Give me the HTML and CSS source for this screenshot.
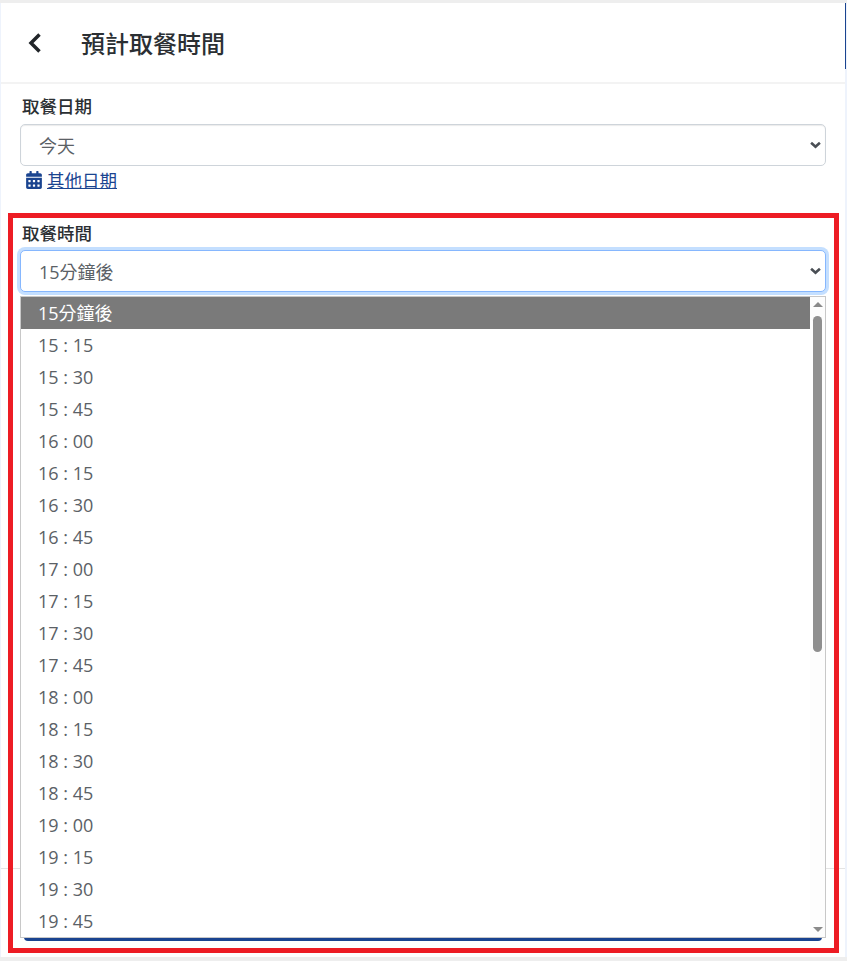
FILE: index.html
```html
<!DOCTYPE html>
<html lang="zh-Hant">
<head>
  <meta charset="UTF-8">
  <meta name="viewport" content="width=device-width, initial-scale=1.0">
  <title>預計取餐時間</title>
  <link rel="stylesheet" href="styles.css">
</head>

<body>
  <div class="page">
    <header class="header">
      <svg class="back-icon" viewBox="0 0 14 20" aria-hidden="true">
        <polyline points="11.500,1.500 3,10 11.500,18.500" />
      </svg>
      <h1>預計取餐時間</h1>
      <span class="scroll-mark"></span>
    </header>

    <form class="form">
      <label for="pickup-date">取餐日期</label>
      <select id="pickup-date" class="select">
        <option>今天</option>
      </select>
      <a class="date-link" href="#">
        <svg class="calendar-icon" viewBox="0 0 448 512" aria-hidden="true">
          <path d="M0 464c0 26.500 21.500 48 48 48h352c26.500 0 48-21.500 48-48V192H0v272zm320-196c0-6.600 5.400-12 12-12h40c6.600 0 12 5.400 12 12v40c0 6.600-5.400 12-12 12h-40c-6.600 0-12-5.400-12-12v-40zm0 128c0-6.600 5.400-12 12-12h40c6.600 0 12 5.400 12 12v40c0 6.600-5.400 12-12 12h-40c-6.600 0-12-5.400-12-12v-40zM192 268c0-6.600 5.400-12 12-12h40c6.600 0 12 5.400 12 12v40c0 6.600-5.400 12-12 12h-40c-6.600 0-12-5.400-12-12v-40zm0 128c0-6.600 5.400-12 12-12h40c6.600 0 12 5.400 12 12v40c0 6.600-5.400 12-12 12h-40c-6.600 0-12-5.400-12-12v-40zM64 268c0-6.600 5.400-12 12-12h40c6.600 0 12 5.400 12 12v40c0 6.600-5.400 12-12 12H76c-6.600 0-12-5.400-12-12v-40zm0 128c0-6.600 5.400-12 12-12h40c6.600 0 12 5.400 12 12v40c0 6.600-5.400 12-12 12H76c-6.600 0-12-5.400-12-12v-40zM400 64h-48V16c0-8.800-7.200-16-16-16h-32c-8.800 0-16 7.200-16 16v48H160V16c0-8.800-7.200-16-16-16h-32c-8.800 0-16 7.200-16 16v48H48C21.500 64 0 85.500 0 112v48h448v-48c0-26.500-21.500-48-48-48z" />
        </svg>
        <span>其他日期</span>
      </a>

      <label for="pickup-time" class="time-label">取餐時間</label>
      <select id="pickup-time" class="select select-focus">
        <option>15分鐘後</option>
      </select>
    </form>

    <footer class="footer">
      <button type="button" class="confirm"></button>
    </footer>

    <div class="dropdown">
      <ul class="dropdown-list">
        <li class="selected">15分鐘後</li>
        <li>15 : 15</li>
        <li>15 : 30</li>
        <li>15 : 45</li>
        <li>16 : 00</li>
        <li>16 : 15</li>
        <li>16 : 30</li>
        <li>16 : 45</li>
        <li>17 : 00</li>
        <li>17 : 15</li>
        <li>17 : 30</li>
        <li>17 : 45</li>
        <li>18 : 00</li>
        <li>18 : 15</li>
        <li>18 : 30</li>
        <li>18 : 45</li>
        <li>19 : 00</li>
        <li>19 : 15</li>
        <li>19 : 30</li>
        <li>19 : 45</li>
      </ul>
      <div class="scrollbar">
        <span class="arrow-up"></span>
        <span class="thumb"></span>
        <span class="arrow-down"></span>
      </div>
    </div>

    <div class="highlight"></div>
  </div>
</body>
</html>
```

FILE: styles.css
```css
html, body {
  margin: 0;
  padding: 0;
  height: 100%;
}
body {
  box-sizing: border-box;
  font-family: "Open Sans", "Noto Sans CJK TC", sans-serif;
  background-color: #eef3fc;
  border-top: 3px solid #eeeeee;
  border-bottom: 4px solid #eeeeee;
  color: #212529;
  overflow: hidden;
}
.page {
  position: relative;
  box-sizing: border-box;
  display: flex;
  flex-direction: column;
  height: 954px;
  margin: 0 2px 0 1px;
  background-color: white;
}
.header {
  position: relative;
  display: flex;
  align-items: center;
  box-sizing: border-box;
  height: 81px;
  padding-left: 27px;
  border-bottom: 2px solid #f3f3f3;
}
.header h1 {
  margin: 0 0 0 39px;
  font-size: 24px;
  font-weight: 500;
  color: #2b2f33;
}
.back-icon {
  width: 14px;
  height: 20px;
  fill: none;
  stroke: #212529;
  stroke-width: 3.500;
}
.scroll-mark {
  position: absolute;
  top: 0;
  right: -1px;
  width: 1px;
  height: 66px;
  background-color: #1a4490;
}
.form {
  display: flex;
  flex-direction: column;
  flex: 1;
  padding: 9px 19px 0 19px;
}
label {
  font-size: 17.500px;
  font-weight: 500;
  line-height: 26px;
  margin-bottom: 5px;
  margin-left: 2px;
  color: #2b2f33;
}
.select {
  appearance: none;
  box-sizing: border-box;
  width: 100%;
  height: 42px;
  padding: 1px 36px 0 18px;
  font-family: inherit;
  font-size: 18px;
  color: #5b6166;
  background-color: white;
  background-image: url("data:image/svg+xml,%3Csvg xmlns='http://www.w3.org/2000/svg' viewBox='0 0 10 7'%3E%3Cpolyline points='1,1.500 5,5 9,1.500' fill='none' stroke='%234a4f55' stroke-width='2.400'/%3E%3C/svg%3E");
  background-repeat: no-repeat;
  background-position: right 4px center;
  background-size: 11px 8px;
  border: 1px solid #ced4da;
  border-radius: 5px;
  box-shadow: inset 0 1px 1px rgba(0, 0, 0, 0.08);
}
.select-focus {
  border-color: #86b7fe;
  box-shadow: 0 0 0 3px #c4dfff;
  outline: none;
}
.date-link {
  display: flex;
  align-items: center;
  height: 27px;
  margin-left: 6px;
  font-size: 17.500px;
  color: #1a4490;
}
.calendar-icon {
  width: 16px;
  height: 18px;
  margin-right: 5px;
  fill: #1a4490;
}
.time-label {
  margin-top: 27px;
  margin-bottom: 4px;
}
.footer {
  box-sizing: border-box;
  height: 73px;
  padding: 0 23px;
  border-top: 1px solid #e4e4e4;
  margin-bottom: 16px;
}
.confirm {
  display: block;
  width: 100%;
  height: 72px;
  border: none;
  border-radius: 4px;
  background-color: #1a4490;
}
.dropdown {
  position: absolute;
  top: 293px;
  left: 19px;
  box-sizing: border-box;
  display: flex;
  width: 806px;
  height: 642px;
  background-color: white;
  border: 1px solid #c8c8c8;
}
.dropdown-list {
  flex: 1;
  margin: 0;
  padding: 0;
  list-style: none;
  font-size: 18px;
  color: #5b6166;
}
.dropdown-list li {
  height: 32px;
  padding-left: 17px;
  line-height: 32px;
}
.dropdown-list .selected {
  background-color: #7a7a7a;
  color: white;
}
.scrollbar {
  display: flex;
  flex-direction: column;
  align-items: center;
  width: 15px;
  background-color: #fdfdfd;
}
.thumb {
  width: 9px;
  height: 336px;
  margin-top: 9px;
  border-radius: 5px;
  background-color: #8f8f8f;
}
.arrow-up, .arrow-down {
  width: 0;
  height: 0;
  border-left: 5px solid transparent;
  border-right: 5px solid transparent;
}
.arrow-up {
  margin-top: 5px;
  border-bottom: 5px solid #8a8a8a;
}
.arrow-down {
  margin-top: auto;
  margin-bottom: 5px;
  border-top: 5px solid #8a8a8a;
}
.highlight {
  position: absolute;
  top: 210px;
  left: 7px;
  box-sizing: border-box;
  width: 831px;
  height: 740px;
  border: 5px solid #ed1c24;
}
```
